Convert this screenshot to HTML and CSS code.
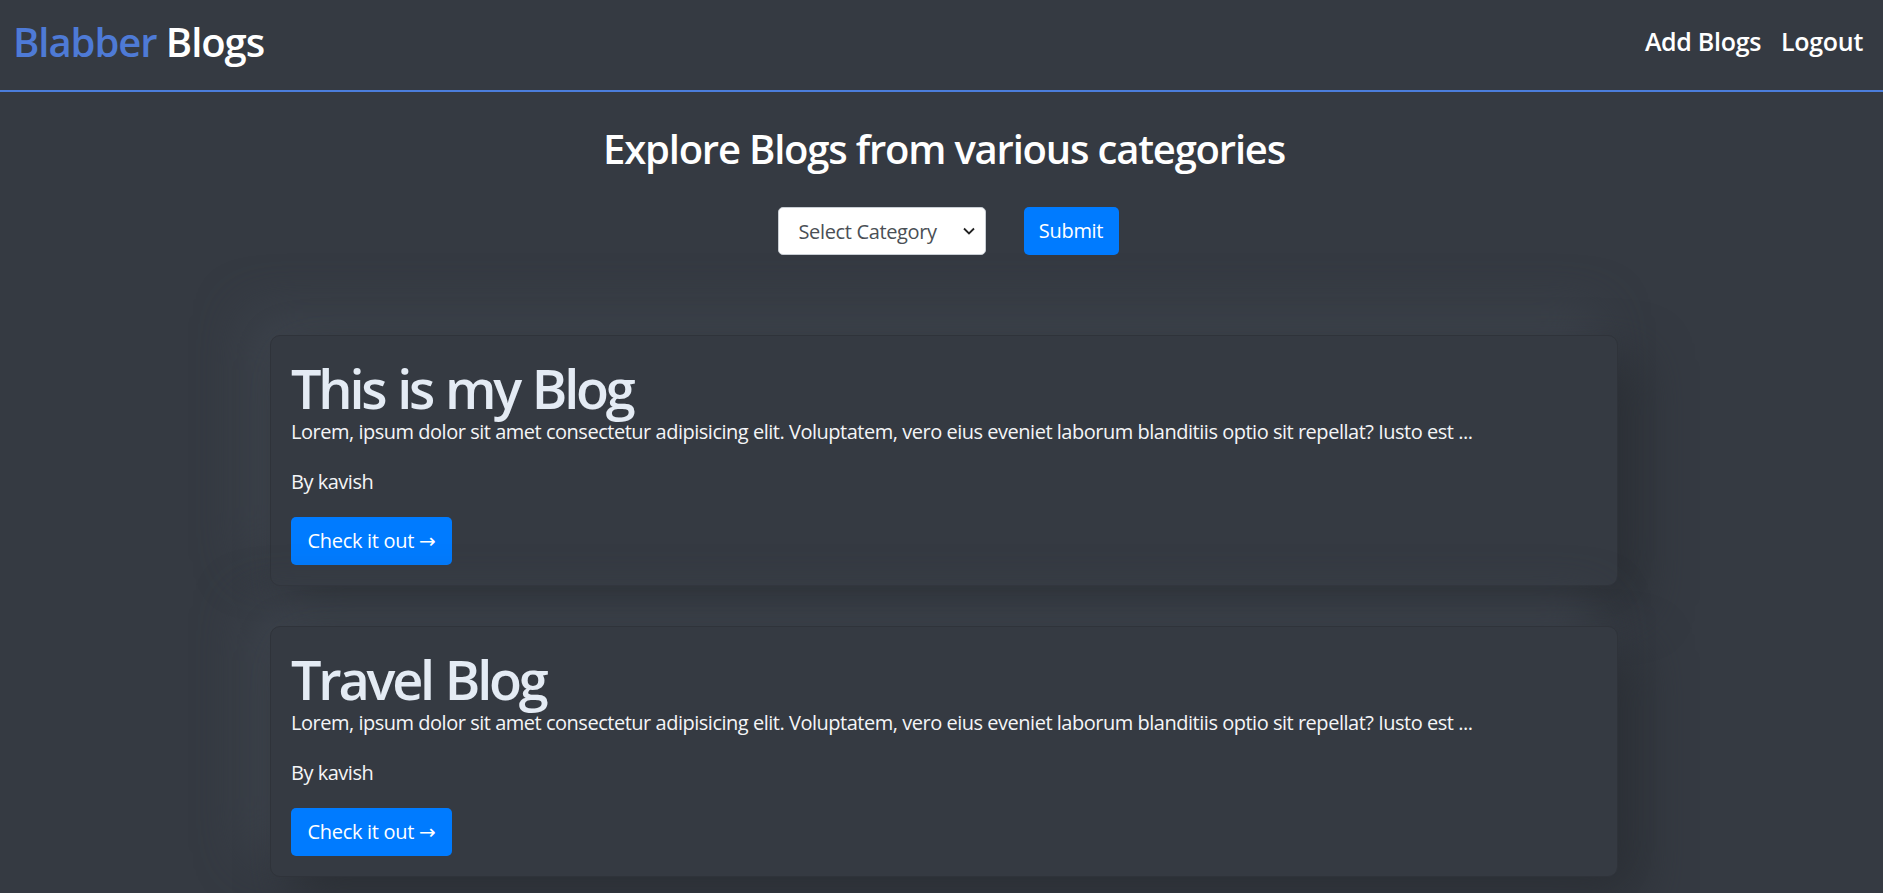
FILE: index.html
```html
<!DOCTYPE html>
<html lang="en">
<head>
<meta charset="utf-8">
<title>Blabber Blogs</title>
<link rel="stylesheet" href="styles.css">
</head>
<body>
<nav class="navbar">
  <a class="brand" href="#"><span class="brand-accent">Blabber</span> Blogs</a>
  <div class="nav-links">
    <a class="nav-link" href="#">Add Blogs</a>
    <a class="nav-link" href="#">Logout</a>
  </div>
</nav>
<main class="main">
  <h2 class="page-title">Explore Blogs from various categories</h2>
  <form class="filter">
    <div class="select-wrap">
      <select class="select">
        <option>Select Category</option>
        <option>Travel</option>
        <option>Tech</option>
      </select>
      <svg class="chevron" width="12" height="8" viewBox="0 0 12 8"><path d="M1 1.5 L6 6.5 L11 1.5" fill="none" stroke="#222" stroke-width="1.8"/></svg>
    </div>
    <button class="btn" type="button">Submit</button>
  </form>
  <section class="cards">
    <article class="card">
      <h1 class="card-title">This is my Blog</h1>
      <p class="card-text">Lorem, ipsum dolor sit amet consectetur adipisicing elit. Voluptatem, vero eius eveniet laborum blanditiis optio sit repellat? Iusto est ...</p>
      <p class="card-text">By kavish</p>
      <a class="btn" href="#">Check it out &rarr;</a>
    </article>
    <article class="card">
      <h1 class="card-title">Travel Blog</h1>
      <p class="card-text">Lorem, ipsum dolor sit amet consectetur adipisicing elit. Voluptatem, vero eius eveniet laborum blanditiis optio sit repellat? Iusto est ...</p>
      <p class="card-text">By kavish</p>
      <a class="btn" href="#">Check it out &rarr;</a>
    </article>
  </section>
</main>
</body>
</html>
```

FILE: styles.css
```css
* { box-sizing: border-box; }
html, body { margin: 0; padding: 0; }
body {
  background: #353a42;
  color: #f4f5f7;
  font-family: "Open Sans", "Noto Sans", "DejaVu Sans", sans-serif;
  font-size: 20px;
  line-height: 1.5;
}
a { text-decoration: none; }

.navbar {
  height: 92px;
  border-bottom: 2px solid #4b7ddb;
  display: flex;
  align-items: center;
  justify-content: space-between;
  padding: 0 20px 6px 13px;
}
.brand {
  font-size: 40px;
  font-weight: 600;
  color: #ffffff;
  letter-spacing: -1.05px;
}
.brand-accent { color: #4e7ad6; }
.nav-links { display: flex; gap: 20px; }
.nav-link {
  font-size: 25px;
  font-weight: 600;
  color: #ffffff;
  letter-spacing: -0.3px;
}

.main { padding: 33px 0 0 5px; }
.page-title {
  margin: 0;
  text-align: center;
  font-size: 40px;
  font-weight: 600;
  line-height: 1.2;
  color: #ffffff;
  letter-spacing: -1.2px;
}
.filter {
  margin-top: 34px;
  display: flex;
  justify-content: center;
  gap: 38px;
  padding-left: 8px;
}
.select-wrap { position: relative; }
.select {
  appearance: none;
  -webkit-appearance: none;
  width: 208px;
  height: 48px;
  border: 1px solid #c9ced4;
  border-radius: 5px;
  background: #ffffff;
  color: #4a4f55;
  font-family: inherit;
  font-size: 20px;
  letter-spacing: -0.35px;
  padding: 0 30px 0 20px;
}
.chevron {
  position: absolute;
  right: 11px;
  top: 20px;
  pointer-events: none;
}
.btn {
  display: inline-block;
  background: #007bff;
  color: #ffffff;
  border: 0;
  border-radius: 5px;
  font-family: inherit;
  font-size: 20px;
  letter-spacing: -0.3px;
  line-height: 48px;
  height: 48px;
  padding: 0 15px;
  cursor: pointer;
}
.filter .btn { width: 95px; padding: 0; text-align: center; }

.cards {
  margin: 80px auto 0;
  width: 1348px;
  display: flex;
  flex-direction: column;
  gap: 40px;
  padding-bottom: 40px;
}
.card {
  background: #353a42;
  border: 1px solid #2f333a;
  border-radius: 10px;
  padding: 20px;
  box-shadow: 22px 22px 50px #2b2f35, -22px -22px 50px #3e444d;
}
.card-title {
  margin: 0;
  padding-top: 3px;
  font-size: 54px;
  font-weight: 600;
  line-height: 58px;
  color: #e4ebf4;
  letter-spacing: -3.2px;
  word-spacing: 2px;
}
.card-text {
  margin: 0 0 20px;
  line-height: 30px;
  color: #f4f5f7;
  letter-spacing: -0.48px;
}
.card .btn { width: 161px; text-align: center; padding: 0; }
```
